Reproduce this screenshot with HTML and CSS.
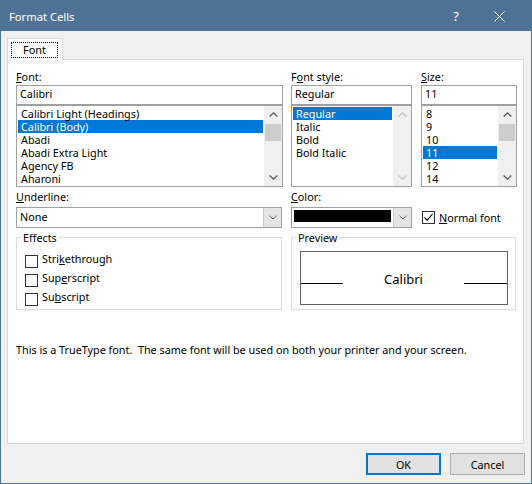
FILE: index.html
```html
<!DOCTYPE html>
<html>
<head>
<meta charset="utf-8">
<link rel="stylesheet" href="styles.css">
</head>
<body>
<div class="window">
  <div class="titlebar">
    <span class="title">Format Cells</span>
    <span class="help">?</span>
    <svg class="close" width="11" height="11" viewBox="0 0 11 11"><path d="M0.5 0.5 L10.5 10.5 M10.5 0.5 L0.5 10.5" stroke="#fff" stroke-width="1" fill="none"/></svg>
  </div>
  <div class="client">
    <div class="tabs">
      <div class="tab"><span class="tab-focus">Font</span></div>
    </div>
    <div class="panel">
      <div class="top">
        <div class="col col-font">
          <div class="label"><u>F</u>ont:</div>
          <div class="input">Calibri</div>
          <div class="list">
            <div class="items">
              <div class="item">Calibri Light (Headings)</div>
              <div class="item sel">Calibri (Body)</div>
              <div class="item">Abadi</div>
              <div class="item">Abadi Extra Light</div>
              <div class="item">Agency FB</div>
              <div class="item">Aharoni</div>
            </div>
            <div class="scroll">
              <div class="sbtn"><svg width="9" height="5" viewBox="0 0 9 5"><path d="M0.6 4.4 L4.5 0.9 L8.4 4.4" fill="none" stroke="#606060" stroke-width="1.3"/></svg></div>
              <div class="track"><div class="thumb"></div></div>
              <div class="sbtn"><svg width="9" height="5" viewBox="0 0 9 5"><path d="M0.6 0.6 L4.5 4.1 L8.4 0.6" fill="none" stroke="#606060" stroke-width="1.3"/></svg></div>
            </div>
          </div>
        </div>
        <div class="col col-style">
          <div class="label">F<u>o</u>nt style:</div>
          <div class="input">Regular</div>
          <div class="list">
            <div class="items">
              <div class="item sel">Regular</div>
              <div class="item">Italic</div>
              <div class="item">Bold</div>
              <div class="item">Bold Italic</div>
            </div>
            <div class="scroll">
              <div class="sbtn"><svg width="9" height="5" viewBox="0 0 9 5"><path d="M0.6 4.4 L4.5 0.9 L8.4 4.4" fill="none" stroke="#c4c4c4" stroke-width="1.3"/></svg></div>
              <div class="track"></div>
              <div class="sbtn"><svg width="9" height="5" viewBox="0 0 9 5"><path d="M0.6 0.6 L4.5 4.1 L8.4 0.6" fill="none" stroke="#c4c4c4" stroke-width="1.3"/></svg></div>
            </div>
          </div>
        </div>
        <div class="col col-size">
          <div class="label"><u>S</u>ize:</div>
          <div class="input">11</div>
          <div class="list">
            <div class="items">
              <div class="item">8</div>
              <div class="item">9</div>
              <div class="item">10</div>
              <div class="item sel">11</div>
              <div class="item">12</div>
              <div class="item">14</div>
            </div>
            <div class="scroll">
              <div class="sbtn"><svg width="9" height="5" viewBox="0 0 9 5"><path d="M0.6 4.4 L4.5 0.9 L8.4 4.4" fill="none" stroke="#606060" stroke-width="1.3"/></svg></div>
              <div class="track"><div class="thumb"></div></div>
              <div class="sbtn"><svg width="9" height="5" viewBox="0 0 9 5"><path d="M0.6 0.6 L4.5 4.1 L8.4 0.6" fill="none" stroke="#606060" stroke-width="1.3"/></svg></div>
            </div>
          </div>
        </div>
      </div>

      <div class="mid">
        <div class="mid-under">
          <div class="label"><u>U</u>nderline:</div>
          <div class="combo">
            <div class="combo-text">None</div>
            <div class="combo-btn"><svg width="8" height="5" viewBox="0 0 8 5"><path d="M0.5 0.8 L4 4 L7.5 0.8" fill="none" stroke="#606060" stroke-width="1"/></svg></div>
          </div>
        </div>
        <div class="mid-color">
          <div class="label"><u>C</u>olor:</div>
          <div class="combo">
            <div class="swatch"></div>
            <div class="combo-btn"><svg width="8" height="5" viewBox="0 0 8 5"><path d="M0.5 0.8 L4 4 L7.5 0.8" fill="none" stroke="#606060" stroke-width="1"/></svg></div>
          </div>
        </div>
        <div class="normal">
          <span class="cb"><svg width="11" height="11" viewBox="0 0 11 11"><path d="M1.5 5.5 L4.2 8.2 L9.5 2.2" fill="none" stroke="#000" stroke-width="1.1"/></svg></span>
          <span><u>N</u>ormal font</span>
        </div>
      </div>

      <div class="groups">
        <div class="group g-effects">
          <div class="legend">Effects</div>
          <div class="cb-list">
            <div class="cb-row"><span class="cb"></span><span class="cb-label">Stri<u>k</u>ethrough</span></div>
            <div class="cb-row"><span class="cb"></span><span class="cb-label">Sup<u>e</u>rscript</span></div>
            <div class="cb-row"><span class="cb"></span><span class="cb-label">Su<u>b</u>script</span></div>
          </div>
        </div>
        <div class="group g-preview">
          <div class="legend">Preview</div>
          <div class="pv-box">
            <div class="pv-line"></div>
            <div class="pv-text">Calibri</div>
            <div class="pv-line pv-line-r"></div>
          </div>
        </div>
      </div>

      <div class="note">This is a TrueType font.&nbsp; The same font will be used on both your printer and your screen.</div>
    </div>
    <div class="buttons">
      <div class="btn default">OK</div>
      <div class="btn">Cancel</div>
    </div>
  </div>
</div>
</body>
</html>
```

FILE: styles.css
```css
* { box-sizing: border-box; }
html, body { margin: 0; padding: 0; }
body {
  font-family: "Noto Sans", "Open Sans", sans-serif;
  font-size: 10.8px;
  color: #000;
  background: #fff;
}
u { text-decoration: underline; text-underline-offset: 1px; }

.window {
  width: 532px;
  height: 484px;
  border: 1px solid #4f7396;
  display: flex;
  flex-direction: column;
  background: #f0f0f0;
}
.titlebar {
  height: 30px;
  flex: none;
  background: #4f7396;
  color: #fff;
  display: flex;
  align-items: center;
  padding-left: 8px;
  font-size: 11.2px;
}
.title { flex: 1; }
.help { width: 8px; text-align: center; margin-right: 34px; font-size: 13px; }
.close { display: block; margin-right: 26px; }

.client {
  flex: 1;
  display: flex;
  flex-direction: column;
  padding: 7px 6px 0 6px;
}
.tabs { display: flex; height: 21px; }
.tab {
  position: relative;
  z-index: 1;
  width: 56px;
  height: 22px;
  border: 1px solid #d9d9d9;
  border-bottom: none;
  background: #fff;
  padding: 3px 0 0 3px;
}
.tab-focus {
  display: block;
  width: 47px;
  height: 16px;
  border: 1px dotted #000;
  text-align: center;
  line-height: 14px;
  font-size: 11px;
}

.panel {
  width: 517px;
  height: 385px;
  border: 1px solid #d9d9d9;
  background: #fff;
  padding: 9px 0 0 8px;
}

.top { display: flex; }
.col-font { width: 267px; }
.col-style { width: 121px; margin-left: 8px; }
.col-size { width: 96px; margin-left: 9px; }
.label { height: 16px; line-height: 16px; white-space: nowrap; }
.input {
  height: 20px;
  border: 1px solid #a0a0a0;
  padding-left: 3px;
  line-height: 16px;
  white-space: nowrap;
}
.list {
  height: 82px;
  border: 1px solid #a0a0a0;
  display: flex;
}
.items { flex: 1; padding: 1px; overflow: hidden; }
.item { height: 13px; line-height: 13px; padding-left: 3px; white-space: nowrap; }
.item.sel { background: #0078d7; color: #fff; }
.scroll {
  width: 18px;
  background: #f0f0f0;
  display: flex;
  flex-direction: column;
}
.sbtn { height: 17px; display: flex; align-items: center; justify-content: center; }
.track { flex: 1; padding-top: 1px; }
.thumb { height: 17px; margin: 0 1px; background: #cdcdcd; }

.mid { display: flex; margin-top: 2px; }
.mid-under { width: 266px; }
.mid-color { width: 121px; margin-left: 9px; }
.combo {
  height: 21px;
  margin-top: 2px;
  border: 1px solid #a0a0a0;
  background: #fff;
  display: flex;
}
.combo-text { flex: 1; padding-left: 3px; line-height: 18px; }
.combo-btn {
  width: 18px;
  background: #e5e5e5;
  border-left: 1px solid #cccccc;
  display: flex;
  align-items: center;
  justify-content: center;
}
.swatch { width: 97px; height: 12px; margin: 2px 2px 0 2px; background: #000; flex: none; }
.mid-color .combo-btn { margin-left: auto; }
.normal {
  align-self: flex-end;
  height: 21px;
  margin-left: 10px;
  display: flex;
  align-items: center;
}
.cb {
  width: 13px;
  height: 13px;
  flex: none;
  border: 1px solid #333;
  background: #fff;
  margin-right: 4px;
  display: flex;
  align-items: center;
  justify-content: center;
}
.cb svg { display: block; }

.groups { display: flex; margin-top: 9px; }
.group { height: 73px; border: 1px solid #dcdcdc; }
.g-effects { width: 266px; }
.g-preview { width: 225px; margin-left: 9px; }
.legend {
  margin: -8px 0 0 4px;
  padding: 0 2px;
  background: #fff;
  width: max-content;
  height: 15px;
  line-height: 15px;
}
.cb-list { padding-top: 6px; }
.cb-row { height: 19px; display: flex; align-items: flex-start; padding-left: 8px; }
.cb-row .cb { margin-top: 4px; }
.cb-label { line-height: 15px; }

.pv-box {
  margin: 6px 7px 0 8px;
  height: 54px;
  border: 1px solid #646464;
  display: flex;
  align-items: baseline;
  justify-content: space-between;
  padding-top: 18px;
}
.pv-line { width: 42px; height: 1px; background: #000; }
.pv-line-r { width: 43px; }
.pv-text { font-size: 13px; line-height: 18px; }

.note { margin-top: 32px; line-height: 15px; white-space: nowrap; }

.buttons { display: flex; justify-content: flex-end; gap: 9px; margin-top: 9px; }
.btn {
  width: 75px;
  height: 22px;
  background: #e1e1e1;
  border: 1px solid #adadad;
  display: flex;
  align-items: center;
  justify-content: center;
}
.btn.default { border: 2px solid #0078d7; }
```
